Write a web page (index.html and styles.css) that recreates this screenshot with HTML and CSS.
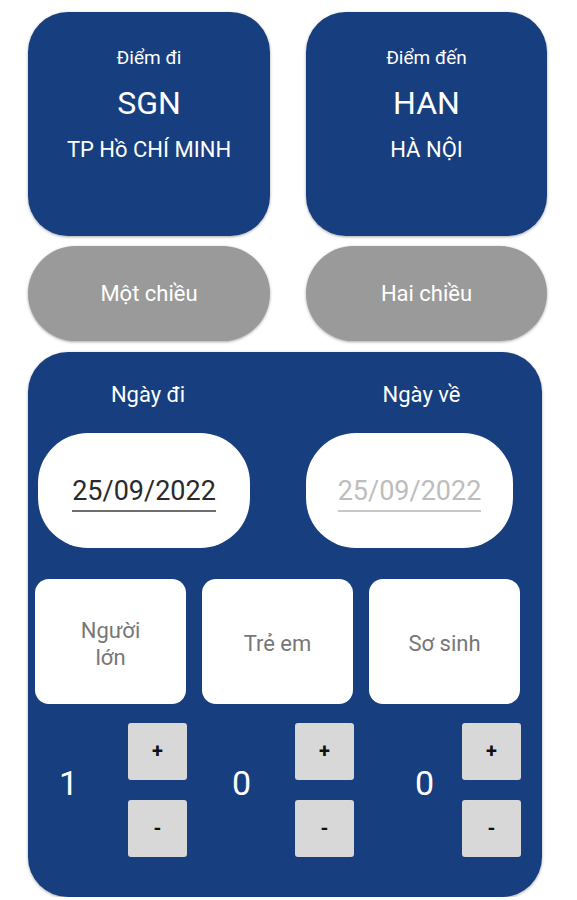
FILE: index.html
```html
<!DOCTYPE html>
<html lang="vi">
<head>
<meta charset="utf-8">
<title>Đặt vé</title>
<link rel="stylesheet" href="styles.css">
</head>
<body>
<div class="page">
  <div class="row">
    <div class="place">
      <div class="place-label">Điểm đi</div>
      <div class="place-code">SGN</div>
      <div class="place-name">TP Hồ CHÍ MINH</div>
    </div>
    <div class="place">
      <div class="place-label">Điểm đến</div>
      <div class="place-code">HAN</div>
      <div class="place-name">HÀ NỘI</div>
    </div>
  </div>
  <div class="row pills">
    <div class="pill">Một chiều</div>
    <div class="pill">Hai chiều</div>
  </div>
  <div class="panel">
    <div class="dates">
      <div class="date-col">
        <div class="date-title">Ngày đi</div>
        <div class="date-box"><span class="date-text">25/09/2022</span></div>
      </div>
      <div class="date-col">
        <div class="date-title right">Ngày về</div>
        <div class="date-box"><span class="date-text muted">25/09/2022</span></div>
      </div>
    </div>
    <div class="pax">
      <div class="pax-col">
        <div class="pax-box">Người<br>lớn</div>
        <div class="counter">
          <div class="count c1">1</div>
          <div class="btns"><div class="btn">+</div><div class="btn">-</div></div>
        </div>
      </div>
      <div class="pax-col">
        <div class="pax-box">Trẻ em</div>
        <div class="counter">
          <div class="count c2">0</div>
          <div class="btns"><div class="btn">+</div><div class="btn">-</div></div>
        </div>
      </div>
      <div class="pax-col">
        <div class="pax-box">Sơ sinh</div>
        <div class="counter">
          <div class="count c3">0</div>
          <div class="btns"><div class="btn">+</div><div class="btn">-</div></div>
        </div>
      </div>
    </div>
  </div>
</div>
</body>
</html>
```
FILE: styles.css
```css
* { box-sizing: border-box; }
body {
  margin: 0;
  background: #ffffff;
  font-family: Roboto, "Noto Sans", "Liberation Sans", sans-serif;
  color: #ffffff;
}
.page {
  padding: 12px 30px 0 28px;
}
.row {
  display: grid;
  grid-template-columns: 242px 241px;
  column-gap: 36px;
}
.place {
  height: 224px;
  background: #173e7e;
  border-radius: 40px;
  box-shadow: 0 1px 3px rgba(0,0,0,0.35);
  display: flex;
  flex-direction: column;
  align-items: center;
  padding-top: 34px;
}
.place-label {
  font-size: 19px;
  line-height: 24px;
}
.place-code {
  font-size: 32px;
  line-height: 36px;
  margin-top: 15px;
}
.place-name {
  font-size: 22px;
  line-height: 28px;
  margin-top: 15px;
}
.pills {
  margin-top: 10px;
}
.pill {
  height: 95px;
  border-radius: 48px;
  background: #9a9a9a;
  box-shadow: 0 1px 3px rgba(0,0,0,0.35);
  display: flex;
  align-items: center;
  justify-content: center;
  font-size: 22px;
}
.panel {
  margin-top: 11px;
  margin-right: 5px;
  height: 545px;
  background: #173e7e;
  border-radius: 40px;
  box-shadow: 0 1px 3px rgba(0,0,0,0.35);
  padding: 30px 0 0 0;
}
.dates {
  display: grid;
  grid-template-columns: 212px 207px;
  column-gap: 56px;
  padding-left: 10px;
}
.date-col {
  display: flex;
  flex-direction: column;
  align-items: center;
}
.date-title {
  font-size: 22px;
  line-height: 26px;
  margin-left: 8px;
}
.date-title.right {
  margin-left: 24px;
}
.date-box {
  margin-top: 25px;
  align-self: stretch;
  height: 115px;
  background: #ffffff;
  border-radius: 50px;
  display: flex;
  align-items: center;
  justify-content: center;
}
.date-text {
  font-size: 27px;
  line-height: 32px;
  color: #2a2a2a;
  border-bottom: 2px solid #6e6e6e;
  padding-bottom: 3px;
  margin-top: 6px;
}
.date-text.muted {
  color: #bdbdbd;
  border-bottom-color: #c8c8c8;
}
.pax {
  margin-top: 31px;
  padding-left: 7px;
  display: grid;
  grid-template-columns: repeat(3, 151px);
  column-gap: 16px;
}
.pax-box {
  height: 125px;
  background: #ffffff;
  border-radius: 14px;
  color: #777777;
  font-size: 22px;
  line-height: 27px;
  display: flex;
  align-items: center;
  justify-content: center;
  text-align: center;
  padding-top: 4px;
}
.counter {
  margin-top: 19px;
  display: flex;
  align-items: center;
}
.count {
  flex: 1;
  font-size: 34px;
  line-height: 40px;
  margin-top: -14px;
}
.c1 { padding-left: 24px; }
.c2 { padding-left: 30px; }
.c3 { padding-left: 46px; }
.btns {
  width: 59px;
  display: flex;
  flex-direction: column;
  gap: 20px;
  margin-right: -1px;
}
.btn {
  height: 57px;
  background: #d8d8d8;
  border-radius: 3px;
  color: #111111;
  font-weight: bold;
  font-size: 20px;
  display: flex;
  align-items: center;
  justify-content: center;
  padding-bottom: 2px;
}
```
